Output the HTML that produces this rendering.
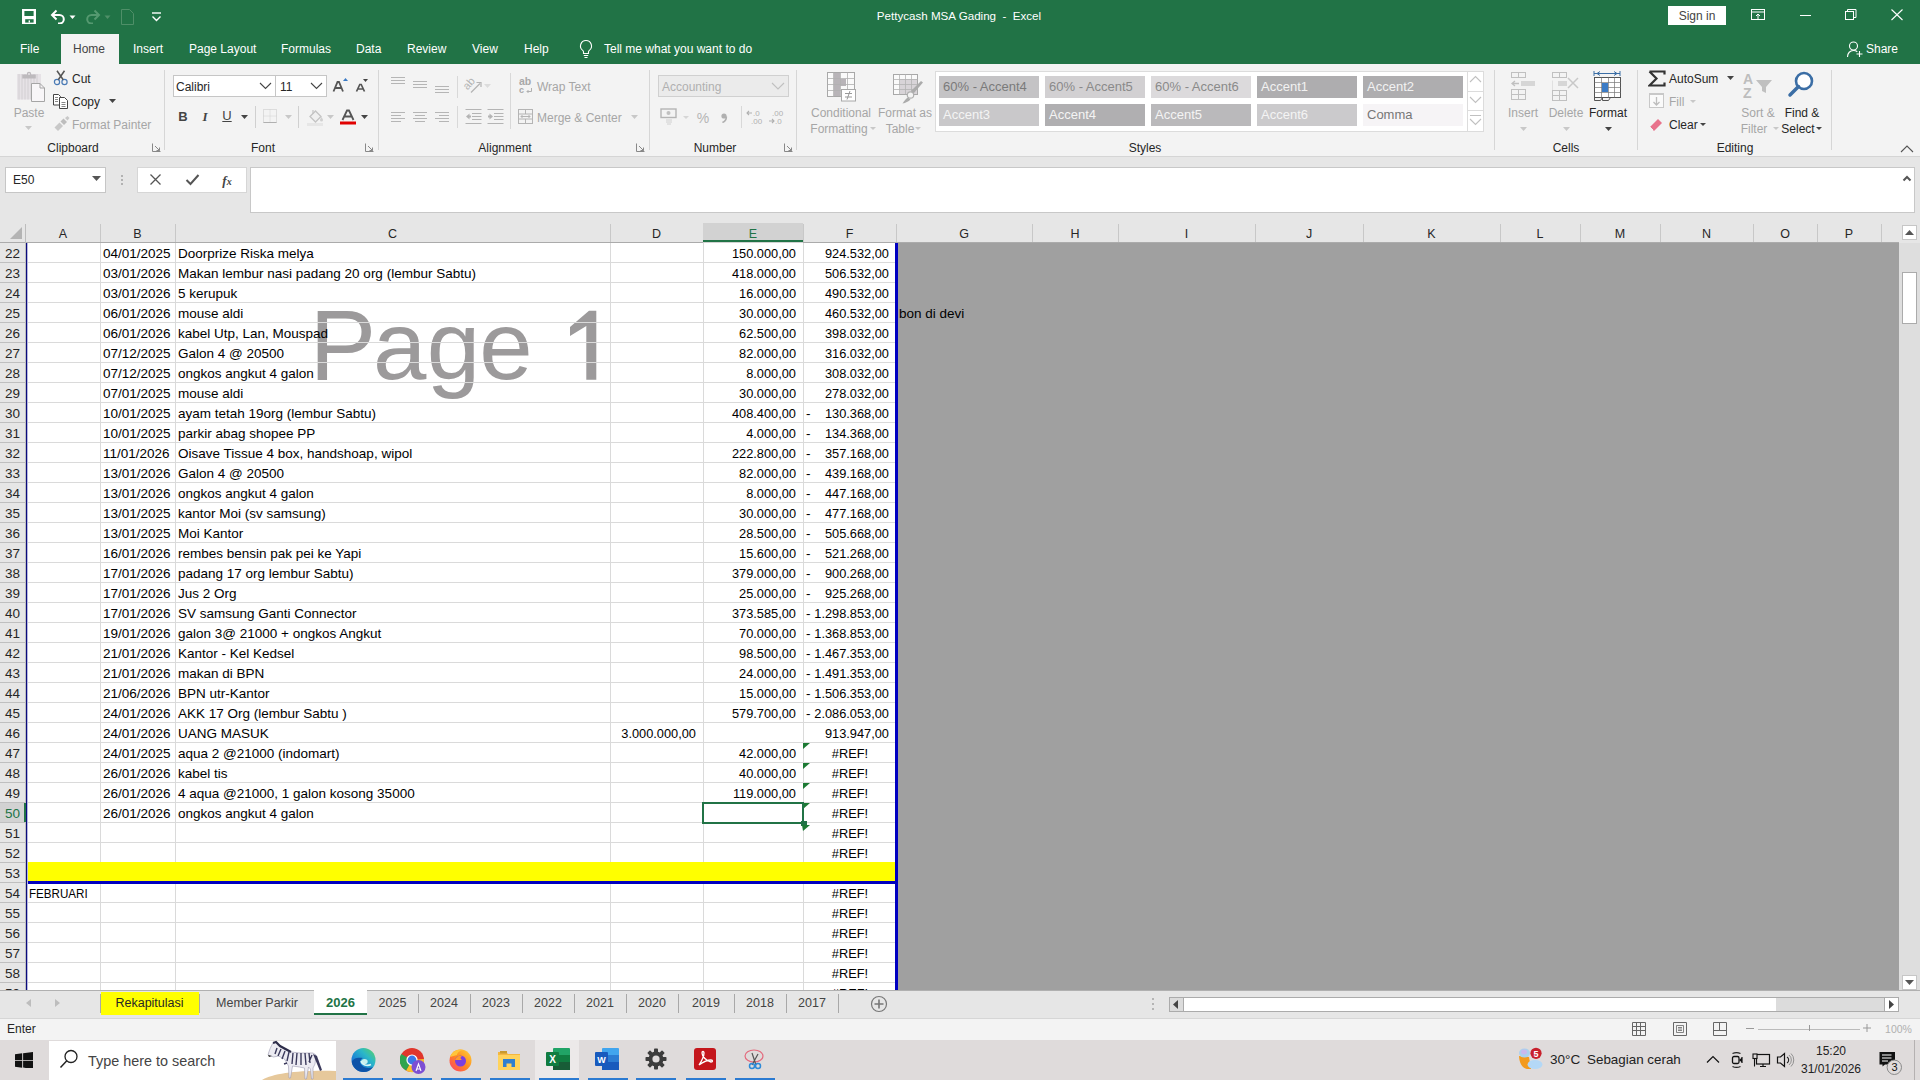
<!DOCTYPE html><html><head><meta charset="utf-8"><style>
html,body{margin:0;padding:0;width:1920px;height:1080px;overflow:hidden;background:#fff}
body{position:relative;font-family:"Liberation Sans",sans-serif}
body>div,body>svg{position:absolute}
div>div{position:absolute}
.t{white-space:nowrap}
.c{position:absolute;white-space:nowrap;font-size:13.5px;line-height:20px;color:#000}
</style></head><body>
<div style="left:0px;top:0px;width:1920px;height:64px;background:#217346"></div>
<svg style="left:22px;top:9px;" width="15" height="16" viewBox="0 0 15 16"><rect x="0" y="0" width="14" height="15" fill="#fff"/><rect x="2.4" y="2" width="9.2" height="5" fill="#217346"/><rect x="3.2" y="10.2" width="8.4" height="3.4" fill="#217346"/><rect x="6.6" y="11.4" width="1.4" height="2.2" fill="#fff"/></svg>
<svg style="left:50px;top:9px;" width="18" height="15" viewBox="0 0 18 15"><path d="M2 6h7.5a4.3 4.3 0 0 1 0 8.6H8" fill="none" stroke="#fff" stroke-width="2"/><path d="M6.5 1.5L2 6l4.5 4.5" fill="none" stroke="#fff" stroke-width="2"/></svg>
<svg style="left:69px;top:15px;" width="8" height="5" viewBox="0 0 8 5"><path d="M.5 .5h6l-3 3.5z" fill="#fff"/></svg>
<svg style="left:86px;top:9px;" width="15" height="15" viewBox="0 0 15 15"><path d="M13 6H5.5a4.3 4.3 0 0 0 0 8.6H7" fill="none" stroke="#559970" stroke-width="2"/><path d="M8.5 1.5L13 6l-4.5 4.5" fill="none" stroke="#559970" stroke-width="2"/></svg>
<svg style="left:104px;top:15px;" width="8" height="5" viewBox="0 0 8 5"><path d="M.5 .5h6l-3 3.5z" fill="#4f8f68"/></svg>
<svg style="left:121px;top:9px;" width="13" height="16" viewBox="0 0 13 16"><path d="M.5 .5h8l4 4v11H.5z" fill="none" stroke="#4f8f68" stroke-width="1"/></svg>
<svg style="left:151px;top:11px;" width="11" height="11" viewBox="0 0 11 11"><path d="M1 2h9" stroke="#fff" stroke-width="1.4"/><path d="M1.5 5.5l4 4 4-4" fill="none" stroke="#fff" stroke-width="1.4"/></svg>
<div class="t" style="left:659px;width:600px;text-align:center;top:6.0px;line-height:20px;font-size:11.6px;color:#fff;">Pettycash MSA Gading&nbsp; -&nbsp; Excel</div>
<div style="left:1668px;top:6px;width:58px;height:19px;background:#fff"></div>
<div class="t" style="left:1397px;width:600px;text-align:center;top:5.5px;line-height:20px;font-size:12px;color:#444;">Sign in</div>
<svg style="left:1751px;top:9px;" width="15" height="12" viewBox="0 0 15 12"><rect x=".5" y=".5" width="13" height="10" fill="none" stroke="#fff" stroke-width="1"/><path d="M.5 3h13" stroke="#fff"/><path d="M7 10V5M5 7l2-2 2 2" fill="none" stroke="#fff" stroke-width="1"/></svg>
<div style="left:1800px;top:15px;width:11px;height:1px;background:#fff"></div>
<svg style="left:1845px;top:9px;" width="12" height="12" viewBox="0 0 12 12"><rect x=".5" y="2.5" width="8" height="8" fill="none" stroke="#fff" stroke-width="1"/><path d="M2.5 2.5V.5h8.5v8H8.5" fill="none" stroke="#fff" stroke-width="1"/></svg>
<svg style="left:1891px;top:9px;" width="12" height="12" viewBox="0 0 12 12"><path d="M.5 .5l11 10.5M11.5 .5L.5 11" stroke="#fff" stroke-width="1.1"/></svg>
<div style="left:61px;top:34px;width:58px;height:30px;background:#f3f3f3"></div>
<div class="t" style="left:20px;top:38.5px;line-height:20px;font-size:12px;color:#fff;">File</div>
<div class="t" style="left:73px;top:38.5px;line-height:20px;font-size:12px;color:#444;">Home</div>
<div class="t" style="left:133px;top:38.5px;line-height:20px;font-size:12px;color:#fff;">Insert</div>
<div class="t" style="left:189px;top:38.5px;line-height:20px;font-size:12px;color:#fff;">Page Layout</div>
<div class="t" style="left:281px;top:38.5px;line-height:20px;font-size:12px;color:#fff;">Formulas</div>
<div class="t" style="left:356px;top:38.5px;line-height:20px;font-size:12px;color:#fff;">Data</div>
<div class="t" style="left:407px;top:38.5px;line-height:20px;font-size:12px;color:#fff;">Review</div>
<div class="t" style="left:472px;top:38.5px;line-height:20px;font-size:12px;color:#fff;">View</div>
<div class="t" style="left:524px;top:38.5px;line-height:20px;font-size:12px;color:#fff;">Help</div>
<svg style="left:578px;top:39px;" width="16" height="20" viewBox="0 0 16 20"><path d="M8 1.5a5.5 5.5 0 0 0-3.3 9.9c.5.4.8 1 .8 1.6v1.5h5v-1.5c0-.6.3-1.2.8-1.6A5.5 5.5 0 0 0 8 1.5z" fill="none" stroke="#fff" stroke-width="1.1"/><path d="M5.8 16.5h4.4M6.5 18.5h3" stroke="#fff" stroke-width="1.1"/></svg>
<div class="t" style="left:604px;top:38.5px;line-height:20px;font-size:12px;color:#fff;">Tell me what you want to do</div>
<svg style="left:1846px;top:40px;" width="18" height="18" viewBox="0 0 18 18"><circle cx="7.5" cy="6" r="4" fill="none" stroke="#fff" stroke-width="1.1"/><path d="M1.5 17c0-4 2.5-6.5 6-6.5 1.5 0 2.8.5 3.8 1.3" fill="none" stroke="#fff" stroke-width="1.1"/><path d="M13.5 11v6M10.5 14h6" stroke="#fff" stroke-width="1.1"/></svg>
<div class="t" style="left:1866px;top:38.5px;line-height:20px;font-size:12px;color:#fff;">Share</div>
<div style="left:0px;top:64px;width:1920px;height:92px;background:#f3f3f3"></div>
<div style="left:0px;top:156px;width:1920px;height:1px;background:#d5d5d5"></div>
<div style="left:164px;top:70px;width:1px;height:80px;background:#d6d6d6"></div>
<div style="left:378px;top:70px;width:1px;height:80px;background:#d6d6d6"></div>
<div style="left:649px;top:70px;width:1px;height:80px;background:#d6d6d6"></div>
<div style="left:796px;top:70px;width:1px;height:80px;background:#d6d6d6"></div>
<div style="left:1494px;top:70px;width:1px;height:80px;background:#d6d6d6"></div>
<div style="left:1637px;top:70px;width:1px;height:80px;background:#d6d6d6"></div>
<div style="left:1831px;top:70px;width:1px;height:80px;background:#d6d6d6"></div>
<div class="t" style="left:-227px;width:600px;text-align:center;top:138.0px;line-height:20px;font-size:12px;color:#262626;">Clipboard</div>
<div class="t" style="left:-37px;width:600px;text-align:center;top:138.0px;line-height:20px;font-size:12px;color:#262626;">Font</div>
<div class="t" style="left:205px;width:600px;text-align:center;top:138.0px;line-height:20px;font-size:12px;color:#262626;">Alignment</div>
<div class="t" style="left:415px;width:600px;text-align:center;top:138.0px;line-height:20px;font-size:12px;color:#262626;">Number</div>
<div class="t" style="left:845px;width:600px;text-align:center;top:138.0px;line-height:20px;font-size:12px;color:#262626;">Styles</div>
<div class="t" style="left:1266px;width:600px;text-align:center;top:138.0px;line-height:20px;font-size:12px;color:#262626;">Cells</div>
<div class="t" style="left:1435px;width:600px;text-align:center;top:138.0px;line-height:20px;font-size:12px;color:#262626;">Editing</div>
<svg style="left:152px;top:143px;" width="10" height="10" viewBox="0 0 10 10"><path d="M.5 .5h8v8" fill="none" stroke="#888" stroke-width="1" transform="rotate(180 4.5 4.5)"/><path d="M3 3l4.5 4.5M7.5 4.5v3h-3" fill="none" stroke="#888" stroke-width="1"/></svg>
<svg style="left:365px;top:143px;" width="10" height="10" viewBox="0 0 10 10"><path d="M.5 .5h8v8" fill="none" stroke="#888" stroke-width="1" transform="rotate(180 4.5 4.5)"/><path d="M3 3l4.5 4.5M7.5 4.5v3h-3" fill="none" stroke="#888" stroke-width="1"/></svg>
<svg style="left:636px;top:143px;" width="10" height="10" viewBox="0 0 10 10"><path d="M.5 .5h8v8" fill="none" stroke="#888" stroke-width="1" transform="rotate(180 4.5 4.5)"/><path d="M3 3l4.5 4.5M7.5 4.5v3h-3" fill="none" stroke="#888" stroke-width="1"/></svg>
<svg style="left:784px;top:143px;" width="10" height="10" viewBox="0 0 10 10"><path d="M.5 .5h8v8" fill="none" stroke="#888" stroke-width="1" transform="rotate(180 4.5 4.5)"/><path d="M3 3l4.5 4.5M7.5 4.5v3h-3" fill="none" stroke="#888" stroke-width="1"/></svg>
<svg style="left:16px;top:71px;" width="30" height="32" viewBox="0 0 30 32"><rect x="1" y="3" width="24" height="25.5" fill="#e6e2e6"/><path d="M3 3v25.5M6 3v25.5M9 3v25.5M12 3v25.5M15 3v25.5M18 3v25.5M21 3v25.5" stroke="#d6d2d6" stroke-width="1.2"/><rect x="6.3" y="3.5" width="13.5" height="4" fill="#bdbabd"/><circle cx="13" cy="3" r="2.2" fill="#bdbabd"/><circle cx="13" cy="3" r="1" fill="#e6e2e6"/><path d="M15.5 12.5h8.5l4.5 4.5v13.5h-13z" fill="#f8f6f8" stroke="#a5a5a5" stroke-width="1"/><path d="M24 12.5v4.5h4.5" fill="none" stroke="#a5a5a5" stroke-width="1"/></svg>
<div class="t" style="left:-271px;width:600px;text-align:center;top:102.5px;line-height:20px;font-size:12px;color:#a6a6a6;">Paste</div>
<svg style="left:25px;top:126px;" width="7" height="4" viewBox="0 0 7 4"><path d="M0 0h7l-3.5 4z" fill="#c8c8c8"/></svg>
<svg style="left:53px;top:70px;" width="16" height="16" viewBox="0 0 16 16"><circle cx="4" cy="12" r="2.6" fill="none" stroke="#4a7ab5" stroke-width="1.2"/><circle cx="11.5" cy="12" r="2.6" fill="none" stroke="#4a7ab5" stroke-width="1.2"/><path d="M5.3 9.8L11.5 .8M10.2 9.8L4 .8" stroke="#555" stroke-width="1.5"/></svg>
<div class="t" style="left:72px;top:68.5px;line-height:20px;font-size:12px;color:#262626;">Cut</div>
<svg style="left:52px;top:93px;" width="17" height="16" viewBox="0 0 17 16"><path d="M1.5 1.5h5l2 2v8.5h-7z" fill="#fff" stroke="#444" stroke-width="1"/><path d="M7.5 4.5h5l3 3v8h-8z" fill="#fff" stroke="#444" stroke-width="1"/><path d="M3 4.5h3M3 6.5h3M3 8.5h3M9.5 9.5h4M9.5 11.5h4M9.5 13.5h4" stroke="#555" stroke-width=".7"/></svg>
<div class="t" style="left:72px;top:91.5px;line-height:20px;font-size:12px;color:#262626;">Copy</div>
<svg style="left:109px;top:99px;" width="7" height="4" viewBox="0 0 7 4"><path d="M0 0h7l-3.5 4z" fill="#444"/></svg>
<svg style="left:53px;top:116px;" width="17" height="15" viewBox="0 0 17 15"><path d="M1.5 11.5l5-5 3.5 3.5-5 5z" fill="#c8c8c8"/><path d="M7.5 5.5l3-3 3.5 3.5-3 3z" fill="#bdbdbd"/><path d="M12 2l2.5-2 2 2-2 2.5z" fill="#c8c8c8"/></svg>
<div class="t" style="left:72px;top:114.5px;line-height:20px;font-size:12px;color:#a6a6a6;">Format Painter</div>
<div style="left:173px;top:75px;width:103px;height:22px;background:#fff;border:1px solid #c6c6c6;box-sizing:border-box"></div>
<div style="left:275px;top:75px;width:52px;height:22px;background:#fff;border:1px solid #c6c6c6;box-sizing:border-box"></div>
<div class="t" style="left:176px;top:77.0px;line-height:20px;font-size:12px;color:#262626;">Calibri</div>
<div class="t" style="left:280px;top:77.0px;line-height:20px;font-size:12px;color:#262626;">11</div>
<svg style="left:259px;top:82px;" width="13" height="8" viewBox="0 0 13 8"><path d="M1 1l5.5 5.5L12 1" fill="none" stroke="#444" stroke-width="1.1"/></svg>
<svg style="left:310px;top:82px;" width="13" height="8" viewBox="0 0 13 8"><path d="M1 1l5.5 5.5L12 1" fill="none" stroke="#444" stroke-width="1.1"/></svg>
<svg style="left:332px;top:77px;" width="18" height="16" viewBox="0 0 18 16"><path d="M1.5 14.5L5.5 5h1.5l4 9.5M3.2 11h6" fill="none" stroke="#555" stroke-width="1.8"/><path d="M11 4h5l-2.5-3z" fill="#3b7bc5"/></svg>
<svg style="left:355px;top:78px;" width="15" height="15" viewBox="0 0 15 15"><path d="M1.5 13.5L4.8 6.5h1.4l3.3 7M2.8 11h5.4" fill="none" stroke="#555" stroke-width="1.7"/><path d="M8 1h5l-2.5 3z" fill="#444"/></svg>
<div class="t" style="left:-117px;width:600px;text-align:center;top:107.0px;line-height:20px;font-size:13px;color:#444;font-weight:bold">B</div>
<div class="t" style="left:-95px;width:600px;text-align:center;top:107.0px;line-height:20px;font-size:13px;color:#444;font-style:italic;font-family:Liberation Serif;font-weight:bold">I</div>
<div class="t" style="left:-73px;width:600px;text-align:center;top:106.0px;line-height:20px;font-size:13px;color:#444;text-decoration:underline">U</div>
<svg style="left:241px;top:115px;" width="7" height="4" viewBox="0 0 7 4"><path d="M0 0h7l-3.5 4z" fill="#444"/></svg>
<div style="left:255px;top:106px;width:1px;height:22px;background:#d0d0d0"></div>
<svg style="left:263px;top:109px;" width="14" height="14" viewBox="0 0 14 14"><rect x=".5" y=".5" width="13" height="13" fill="none" stroke="#c4c4c4" stroke-dasharray="1 1"/><path d="M7 .5v13M.5 7h13" stroke="#d0d0d0" stroke-dasharray="1 1"/><path d="M.5 13.5h13" stroke="#b0b0b0"/></svg>
<svg style="left:285px;top:115px;" width="7" height="4" viewBox="0 0 7 4"><path d="M0 0h7l-3.5 4z" fill="#c8c8c8"/></svg>
<div style="left:298px;top:106px;width:1px;height:22px;background:#d0d0d0"></div>
<svg style="left:305px;top:107px;" width="20" height="19" viewBox="0 0 20 19"><path d="M5 9.5l5.5-5.5 5.5 5.5-5.5 5.5z" fill="#f0f0f0" stroke="#c4c4c4" stroke-width="1.3"/><path d="M8 3V7" stroke="#c4c4c4" stroke-width="1.2"/><path d="M16.5 10c1 1.5 1.5 2.5 1.5 3a1 1 0 0 1-3 0c0-.5.5-1.5 1.5-3z" fill="#d0d0d0"/><rect x="2" y="16" width="16" height="3" fill="#e6e6e6"/></svg>
<svg style="left:327px;top:115px;" width="7" height="4" viewBox="0 0 7 4"><path d="M0 0h7l-3.5 4z" fill="#c8c8c8"/></svg>
<svg style="left:340px;top:109px;" width="16" height="16" viewBox="0 0 16 16"><path d="M2.5 11L7 1.5h2L13.5 11M4.6 7.5h6.8" fill="none" stroke="#555" stroke-width="1.8"/><rect x="0" y="12.5" width="16" height="3" fill="#e00000"/></svg>
<svg style="left:361px;top:115px;" width="7" height="4" viewBox="0 0 7 4"><path d="M0 0h7l-3.5 4z" fill="#444"/></svg>
<svg style="left:391px;top:77px;" width="16" height="10" viewBox="0 0 16 10"><path d="M0 0.5h14" stroke="#b5b5b5" stroke-width="1"/><path d="M0 3.5h14" stroke="#b5b5b5" stroke-width="1"/><path d="M0 6.5h14" stroke="#b5b5b5" stroke-width="1"/></svg>
<svg style="left:413px;top:81px;" width="16" height="10" viewBox="0 0 16 10"><path d="M0 0.5h14" stroke="#b5b5b5" stroke-width="1"/><path d="M0 3.5h14" stroke="#b5b5b5" stroke-width="1"/><path d="M0 6.5h14" stroke="#b5b5b5" stroke-width="1"/></svg>
<svg style="left:435px;top:86px;" width="16" height="10" viewBox="0 0 16 10"><path d="M0 0.5h14" stroke="#b5b5b5" stroke-width="1"/><path d="M0 3.5h14" stroke="#b5b5b5" stroke-width="1"/><path d="M0 6.5h14" stroke="#b5b5b5" stroke-width="1"/></svg>
<div style="left:457px;top:76px;width:1px;height:22px;background:#d8d8d8"></div>
<svg style="left:462px;top:76px;" width="22" height="20" viewBox="0 0 22 20"><text x="0" y="0" font-size="11" fill="#b4b4b4" font-family="Liberation Sans" transform="translate(5.5 14.5) rotate(-48)">ab</text><path d="M9 16.5l9-9" stroke="#b4b4b4" stroke-width="1.3"/><path d="M14.5 6.5h4.5v4.5" fill="none" stroke="#b4b4b4" stroke-width="1.2"/></svg>
<svg style="left:484px;top:84px;" width="7" height="4" viewBox="0 0 7 4"><path d="M0 0h7l-3.5 4z" fill="#dcdcdc"/></svg>
<svg style="left:391px;top:112px;" width="16" height="13" viewBox="0 0 16 13"><path d="M0 0.5h14" stroke="#b5b5b5" stroke-width="1"/><path d="M0 3.5h10" stroke="#b5b5b5" stroke-width="1"/><path d="M0 6.5h14" stroke="#b5b5b5" stroke-width="1"/><path d="M0 9.5h10" stroke="#b5b5b5" stroke-width="1"/></svg>
<svg style="left:413px;top:112px;" width="16" height="13" viewBox="0 0 16 13"><path d="M0 0.5h14" stroke="#b5b5b5" stroke-width="1"/><path d="M2 3.5h10" stroke="#b5b5b5" stroke-width="1"/><path d="M0 6.5h14" stroke="#b5b5b5" stroke-width="1"/><path d="M2 9.5h10" stroke="#b5b5b5" stroke-width="1"/></svg>
<svg style="left:435px;top:112px;" width="16" height="13" viewBox="0 0 16 13"><path d="M0 0.5h14" stroke="#b5b5b5" stroke-width="1"/><path d="M4 3.5h10" stroke="#b5b5b5" stroke-width="1"/><path d="M0 6.5h14" stroke="#b5b5b5" stroke-width="1"/><path d="M4 9.5h10" stroke="#b5b5b5" stroke-width="1"/></svg>
<div style="left:457px;top:106px;width:1px;height:22px;background:#d8d8d8"></div>
<svg style="left:465px;top:109px;" width="17" height="15" viewBox="0 0 17 15"><path d="M.5 .5h16M7 4.5h9.5M7 7.5h9.5M7 10.5h9.5M.5 14.5h16" stroke="#b4b4b4"/><path d="M1 7.5l3.5-3v6z" fill="#b4b4b4"/><rect x="4" y="6.5" width="2" height="2" fill="#b4b4b4"/></svg>
<svg style="left:487px;top:109px;" width="17" height="15" viewBox="0 0 17 15"><path d="M.5 .5h16M7 4.5h9.5M7 7.5h9.5M7 10.5h9.5M.5 14.5h16" stroke="#b4b4b4"/><path d="M6 7.5l-3.5-3v6z" fill="#b4b4b4"/><rect x="1" y="6.5" width="2" height="2" fill="#b4b4b4"/></svg>
<div style="left:510px;top:73px;width:1px;height:56px;background:#d8d8d8"></div>
<svg style="left:518px;top:76px;" width="16" height="18" viewBox="0 0 16 18"><text x="1" y="9" font-size="10.5" fill="#a8a8a8" font-family="Liberation Sans" font-weight="bold">ab</text><text x="1" y="17" font-size="9" fill="#a8a8a8" font-family="Liberation Sans" font-weight="bold">c</text><path d="M13.5 12v3.5H9M10.5 14l-1.5 1.5 1.5 1.5" fill="none" stroke="#b0b0b0" stroke-width="1"/></svg>
<div class="t" style="left:537px;top:77.0px;line-height:20px;font-size:12px;color:#a6a6a6;">Wrap Text</div>
<svg style="left:517px;top:108px;" width="17" height="17" viewBox="0 0 17 17"><rect x="1.5" y="1.5" width="14" height="14" fill="none" stroke="#b4b4b4" stroke-width="1"/><path d="M1.5 6h14M1.5 11h14M8.5 1.5V6M8.5 11v4.5" stroke="#b4b4b4" stroke-width="1"/><path d="M4 8.5h9M5.5 7l-1.5 1.5 1.5 1.5M11.5 7l1.5 1.5-1.5 1.5" fill="none" stroke="#b4b4b4" stroke-width="1"/></svg>
<div class="t" style="left:537px;top:107.5px;line-height:20px;font-size:12px;color:#a6a6a6;">Merge &amp; Center</div>
<svg style="left:631px;top:115px;" width="7" height="4" viewBox="0 0 7 4"><path d="M0 0h7l-3.5 4z" fill="#c8c8c8"/></svg>
<div style="left:658px;top:75px;width:131px;height:22px;background:#ebebeb;border:1px solid #d0d0d0;box-sizing:border-box"></div>
<div class="t" style="left:662px;top:77.0px;line-height:20px;font-size:12px;color:#b0b0b0;">Accounting</div>
<svg style="left:771px;top:82px;" width="14" height="8" viewBox="0 0 14 8"><path d="M1 1l6 6 6-6" fill="none" stroke="#c0c0c0" stroke-width="1.1"/></svg>
<svg style="left:660px;top:108px;" width="18" height="18" viewBox="0 0 18 18"><rect x="1" y="1" width="15" height="8.5" fill="none" stroke="#b4b4b4" stroke-width="1.4"/><circle cx="8.5" cy="5" r="2" fill="#c0c0c0"/><path d="M6 12h6M6 14h6M7 16h4" stroke="#d0d0d0" stroke-width="1"/></svg>
<svg style="left:683px;top:116px;" width="6" height="3" viewBox="0 0 6 3"><path d="M0 0h6l-3 3z" fill="#d6d6d6"/></svg>
<div class="t" style="left:403px;width:600px;text-align:center;top:108.0px;line-height:20px;font-size:14px;color:#b5b5b5;">%</div>
<svg style="left:719px;top:111px;" width="10" height="12" viewBox="0 0 10 12"><circle cx="5" cy="5" r="2.6" fill="#b0b0b0"/><path d="M7.4 5.5c0 3-1.5 5-4 6" fill="none" stroke="#b0b0b0" stroke-width="1.6"/></svg>
<div style="left:741px;top:106px;width:1px;height:22px;background:#d8d8d8"></div>
<svg style="left:746px;top:108px;" width="20" height="18" viewBox="0 0 20 18"><path d="M1 5h5M3 3L1 5l2 2" fill="none" stroke="#b0b0b0" stroke-width="1.1"/><text x="7" y="8" font-size="8" fill="#b0b0b0" font-family="Liberation Sans">.0</text><text x="5" y="16" font-size="8" fill="#b0b0b0" font-family="Liberation Sans">.00</text></svg>
<svg style="left:768px;top:108px;" width="20" height="18" viewBox="0 0 20 18"><text x="4" y="8" font-size="8" fill="#b0b0b0" font-family="Liberation Sans">.00</text><path d="M1 13h5M4 11l2 2-2 2" fill="none" stroke="#b0b0b0" stroke-width="1.1"/><text x="7" y="16" font-size="8" fill="#b0b0b0" font-family="Liberation Sans">.0</text></svg>
<svg style="left:826px;top:71px;" width="32" height="32" viewBox="0 0 32 32"><rect x="1.5" y="1.5" width="27" height="24" fill="#fafafa" stroke="#a8a8a8"/><rect x="8" y="2" width="6" height="23" fill="#b8b4b8"/><rect x="14" y="8" width="6" height="7" fill="#b8b4b8"/><path d="M1.5 7.5h27M1.5 13.5h27M1.5 19.5h27M7.5 1.5v24M14.5 1.5v24M21.5 1.5v24" stroke="#b0b0b0" stroke-width=".8"/><rect x="15.5" y="18.5" width="14" height="11.5" fill="#fff" stroke="#a8a8a8"/><path d="M19 22.5h7M19 26h7M24 20l-3 8.5" stroke="#999" stroke-width="1"/></svg>
<div class="t" style="left:541px;width:600px;text-align:center;top:103.0px;line-height:20px;font-size:12px;color:#a6a6a6;">Conditional</div>
<div class="t" style="left:539px;width:600px;text-align:center;top:119.0px;line-height:20px;font-size:12px;color:#a6a6a6;">Formatting</div>
<svg style="left:870px;top:127px;" width="6" height="4" viewBox="0 0 6 4"><path d="M0 0h6l-3 3z" fill="#c8c8c8"/></svg>
<svg style="left:891px;top:73px;" width="34" height="31" viewBox="0 0 34 31"><rect x="2.5" y="1.5" width="24" height="20" fill="#fafafa" stroke="#a8a8a8"/><rect x="9" y="6" width="17" height="15" fill="#d8d4d8"/><path d="M2.5 6.5h24M2.5 11.5h24M2.5 16.5h24M8.5 1.5v20M14.5 1.5v20M20.5 1.5v20" stroke="#b4b4b4" stroke-width=".8"/><path d="M32 9.5L22.5 20.5l-2.5-2.5L30 8z" fill="#ababab"/><circle cx="19.5" cy="22" r="3.2" fill="#f3f3f3" stroke="#b0b0b0" stroke-width="1.2"/><path d="M17 24.5c-2 1-4 3.5-5.5 6 3-.5 6-2 8-4z" fill="#ababab"/></svg>
<div class="t" style="left:605px;width:600px;text-align:center;top:103.0px;line-height:20px;font-size:12px;color:#a6a6a6;">Format as</div>
<div class="t" style="left:600px;width:600px;text-align:center;top:119.0px;line-height:20px;font-size:12px;color:#a6a6a6;">Table</div>
<svg style="left:915px;top:127px;" width="6" height="4" viewBox="0 0 6 4"><path d="M0 0h6l-3 3z" fill="#c8c8c8"/></svg>
<div style="left:935px;top:71px;width:549px;height:61px;background:#fff;border:1px solid #dcdcdc;box-sizing:border-box"></div>
<div style="left:939px;top:76px;width:100px;height:22px;background:#c4c3c5"></div>
<div class="t" style="left:943px;top:77.0px;line-height:20px;font-size:13px;color:#7a7a7a;">60% - Accent4</div>
<div style="left:1045px;top:76px;width:100px;height:22px;background:#d2d0d2"></div>
<div class="t" style="left:1049px;top:77.0px;line-height:20px;font-size:13px;color:#8a8a8a;">60% - Accent5</div>
<div style="left:1151px;top:76px;width:100px;height:22px;background:#dcdadc"></div>
<div class="t" style="left:1155px;top:77.0px;line-height:20px;font-size:13px;color:#8a8a8a;">60% - Accent6</div>
<div style="left:1257px;top:76px;width:100px;height:22px;background:#aeadaf"></div>
<div class="t" style="left:1261px;top:77.0px;line-height:20px;font-size:13px;color:#f2f2f2;">Accent1</div>
<div style="left:1363px;top:76px;width:100px;height:22px;background:#aeadaf"></div>
<div class="t" style="left:1367px;top:77.0px;line-height:20px;font-size:13px;color:#f2f2f2;">Accent2</div>
<div style="left:939px;top:104px;width:100px;height:22px;background:#c9c8ca"></div>
<div class="t" style="left:943px;top:105.0px;line-height:20px;font-size:13px;color:#f4f4f4;">Accent3</div>
<div style="left:1045px;top:104px;width:100px;height:22px;background:#b0afb1"></div>
<div class="t" style="left:1049px;top:105.0px;line-height:20px;font-size:13px;color:#f4f4f4;">Accent4</div>
<div style="left:1151px;top:104px;width:100px;height:22px;background:#bab9bb"></div>
<div class="t" style="left:1155px;top:105.0px;line-height:20px;font-size:13px;color:#f4f4f4;">Accent5</div>
<div style="left:1257px;top:104px;width:100px;height:22px;background:#cbcacc"></div>
<div class="t" style="left:1261px;top:105.0px;line-height:20px;font-size:13px;color:#f4f4f4;">Accent6</div>
<div style="left:1363px;top:104px;width:100px;height:22px;background:#f6f4f6"></div>
<div class="t" style="left:1367px;top:105.0px;line-height:20px;font-size:13px;color:#777;">Comma</div>
<div style="left:1467px;top:71px;width:17px;height:61px;background:#fff;border:1px solid #dcdcdc;box-sizing:border-box"></div>
<div style="left:1467px;top:91px;width:17px;height:1px;background:#dcdcdc"></div>
<div style="left:1467px;top:110px;width:17px;height:1px;background:#dcdcdc"></div>
<svg style="left:1468px;top:75px;" width="15" height="10" viewBox="0 0 15 10"><path d="M2 7l5.5-5.5L13 7" fill="none" stroke="#c0c0c0" stroke-width="1.1"/></svg>
<svg style="left:1468px;top:95px;" width="15" height="10" viewBox="0 0 15 10"><path d="M2 2l5.5 5.5L13 2" fill="none" stroke="#c0c0c0" stroke-width="1.1"/></svg>
<svg style="left:1468px;top:113px;" width="15" height="15" viewBox="0 0 15 15"><path d="M2 2.5h11" stroke="#c0c0c0"/><path d="M2 6l5.5 5.5L13 6" fill="none" stroke="#c0c0c0" stroke-width="1.1"/></svg>
<svg style="left:1510px;top:71px;" width="30" height="30" viewBox="0 0 30 30"><rect x="1.5" y="1.5" width="14" height="5" fill="none" stroke="#c0c0c0"/><path d="M8.5 1.5v5" stroke="#c0c0c0"/><rect x="11" y="10" width="14" height="5" fill="#d6d6d6"/><path d="M2 12.5h7M5 10l-3 2.5L5 15" fill="none" stroke="#c0c0c0" stroke-width="1.3"/><rect x="1.5" y="18.5" width="14" height="10" fill="none" stroke="#c0c0c0"/><path d="M8.5 18.5v10M1.5 23.5h14" stroke="#c0c0c0"/></svg>
<div class="t" style="left:1223px;width:600px;text-align:center;top:103.0px;line-height:20px;font-size:12px;color:#a6a6a6;">Insert</div>
<svg style="left:1520px;top:127px;" width="7" height="4" viewBox="0 0 7 4"><path d="M0 0h7l-3.5 4z" fill="#c8c8c8"/></svg>
<svg style="left:1551px;top:71px;" width="32" height="30" viewBox="0 0 32 30"><rect x="1.5" y="1.5" width="14" height="5" fill="none" stroke="#c0c0c0"/><path d="M8.5 1.5v5" stroke="#c0c0c0"/><rect x="7" y="10" width="9" height="5" fill="#d6d6d6"/><path d="M1.5 9.5v20M15.5 9.5v0" stroke="#e0e0e0"/><rect x="1.5" y="19.5" width="14" height="10" fill="none" stroke="#c0c0c0"/><path d="M8.5 19.5v10M1.5 24.5h14" stroke="#c0c0c0"/><path d="M17 7l10 10M27 7L17 17" stroke="#c8c8c8" stroke-width="1.5"/></svg>
<div class="t" style="left:1266px;width:600px;text-align:center;top:103.0px;line-height:20px;font-size:12px;color:#a6a6a6;">Delete</div>
<svg style="left:1563px;top:127px;" width="7" height="4" viewBox="0 0 7 4"><path d="M0 0h7l-3.5 4z" fill="#c8c8c8"/></svg>
<svg style="left:1593px;top:70px;" width="30" height="32" viewBox="0 0 30 32"><path d="M1 3.5h26M1 1v5M27 1v5M4 3.5l3-2M4 3.5l3 2M24 3.5l-3-2M24 3.5l-3 2" fill="none" stroke="#3b6ea5" stroke-width="1"/><rect x="1.5" y="7.5" width="26" height="20" fill="#fff" stroke="#555"/><path d="M8.5 7.5v20M15.5 7.5v20M21.5 7.5v20M1.5 12.5h26M1.5 17.5h26M1.5 22.5h26" stroke="#777" stroke-width=".7"/><rect x="9" y="13" width="6" height="9" fill="#3b7bc5"/><path d="M1.5 27.5v3h6l2-3M9.5 27.5v3h6l2-3" fill="none" stroke="#555"/></svg>
<div class="t" style="left:1308px;width:600px;text-align:center;top:103.0px;line-height:20px;font-size:12px;color:#262626;">Format</div>
<svg style="left:1605px;top:127px;" width="7" height="4" viewBox="0 0 7 4"><path d="M0 0h7l-3.5 4z" fill="#444"/></svg>
<svg style="left:1648px;top:70px;" width="18" height="17" viewBox="0 0 18 17"><path d="M1.5 1.5h15v3M1.5 1.5l7 7-7 7h15v-3" fill="none" stroke="#333" stroke-width="2.2" stroke-linejoin="miter"/></svg>
<div class="t" style="left:1669px;top:68.5px;line-height:20px;font-size:12px;color:#262626;">AutoSum</div>
<svg style="left:1727px;top:76px;" width="7" height="4" viewBox="0 0 7 4"><path d="M0 0h7l-3.5 4z" fill="#444"/></svg>
<svg style="left:1649px;top:93px;" width="16" height="16" viewBox="0 0 16 16"><rect x=".5" y=".5" width="14" height="14" fill="#fafafa" stroke="#c8c8c8"/><rect x="0" y="0" width="15" height="2" fill="#c8c8c8"/><path d="M7.5 4v8M4.5 9l3 3 3-3" fill="none" stroke="#bdbdbd" stroke-width="1.3"/></svg>
<div class="t" style="left:1669px;top:91.5px;line-height:20px;font-size:12px;color:#a6a6a6;">Fill</div>
<svg style="left:1690px;top:100px;" width="6" height="4" viewBox="0 0 6 4"><path d="M0 0h6l-3 3z" fill="#c8c8c8"/></svg>
<svg style="left:1649px;top:116px;" width="15" height="15" viewBox="0 0 15 15"><path d="M1 11l8-8 4 4-8 8z" fill="#e8738c"/><path d="M1 11l3 3" stroke="#f3f3f3" stroke-width="1"/></svg>
<div class="t" style="left:1669px;top:114.5px;line-height:20px;font-size:12px;color:#262626;">Clear</div>
<svg style="left:1700px;top:123px;" width="6" height="4" viewBox="0 0 6 4"><path d="M0 0h6l-3 3z" fill="#444"/></svg>
<svg style="left:1743px;top:71px;" width="32" height="30" viewBox="0 0 32 30"><text x="0" y="13" font-size="14" fill="#bdbdbd" font-family="Liberation Sans" font-weight="bold">A</text><text x="0" y="27" font-size="14" fill="#bdbdbd" font-family="Liberation Sans" font-weight="bold">Z</text><path d="M13 9h16l-6 7v6l-4-2v-4z" fill="#c0c0c0"/></svg>
<div class="t" style="left:1458px;width:600px;text-align:center;top:103.0px;line-height:20px;font-size:12px;color:#a6a6a6;">Sort &amp;</div>
<div class="t" style="left:1454px;width:600px;text-align:center;top:119.0px;line-height:20px;font-size:12px;color:#a6a6a6;">Filter</div>
<svg style="left:1773px;top:127px;" width="6" height="4" viewBox="0 0 6 4"><path d="M0 0h6l-3 3z" fill="#c8c8c8"/></svg>
<svg style="left:1786px;top:70px;" width="30" height="30" viewBox="0 0 30 30"><circle cx="18" cy="11" r="8" fill="#fff" stroke="#3b6ea5" stroke-width="2.6"/><path d="M12.5 16.5L4 25" stroke="#3b6ea5" stroke-width="3.5" stroke-linecap="round"/></svg>
<div class="t" style="left:1502px;width:600px;text-align:center;top:103.0px;line-height:20px;font-size:12px;color:#262626;">Find &amp;</div>
<div class="t" style="left:1498px;width:600px;text-align:center;top:119.0px;line-height:20px;font-size:12px;color:#262626;">Select</div>
<svg style="left:1816px;top:127px;" width="6" height="4" viewBox="0 0 6 4"><path d="M0 0h6l-3 3z" fill="#444"/></svg>
<svg style="left:1900px;top:145px;" width="14" height="8" viewBox="0 0 14 8"><path d="M1 7l6-6 6 6" fill="none" stroke="#555" stroke-width="1.1"/></svg>
<div style="left:0px;top:157px;width:1920px;height:66px;background:#e6e6e6"></div>
<div style="left:5px;top:167px;width:101px;height:26px;background:#fff;border:1px solid #c6c6c6;box-sizing:border-box"></div>
<div class="t" style="left:13px;top:170.0px;line-height:20px;font-size:12px;color:#262626;">E50</div>
<svg style="left:92px;top:176px;" width="9" height="6" viewBox="0 0 9 6"><path d="M0 0h9l-4.5 5z" fill="#555"/></svg>
<div style="left:121px;top:175px;width:2px;height:2px;background:#a0a0a0;border-radius:1px"></div>
<div style="left:121px;top:179px;width:2px;height:2px;background:#a0a0a0;border-radius:1px"></div>
<div style="left:121px;top:183px;width:2px;height:2px;background:#a0a0a0;border-radius:1px"></div>
<div style="left:137px;top:167px;width:110px;height:26px;background:#fff;border:1px solid #d6d6d6;box-sizing:border-box"></div>
<svg style="left:149px;top:173px;" width="13" height="13" viewBox="0 0 13 13"><path d="M1.5 1.5l10 10M11.5 1.5l-10 10" stroke="#555" stroke-width="1.3"/></svg>
<svg style="left:185px;top:173px;" width="15" height="13" viewBox="0 0 15 13"><path d="M1.5 7l4 4L13.5 2" fill="none" stroke="#555" stroke-width="2"/></svg>
<div class="t" style="left:-73px;width:600px;text-align:center;top:171.0px;line-height:20px;font-size:13px;color:#444;font-family:Liberation Serif;font-weight:bold"><i>f</i><i style="font-size:10px">x</i></div>
<div style="left:250px;top:167px;width:1665px;height:46px;background:#fff;border:1px solid #c8c8c8;box-sizing:border-box"></div>
<svg style="left:1902px;top:175px;" width="10" height="8" viewBox="0 0 10 8"><path d="M1.5 5.5l3.5-3.5 3.5 3.5" fill="none" stroke="#555" stroke-width="2"/></svg>
<div style="left:0px;top:223px;width:1899px;height:20px;background:#e6e6e6"></div>
<div style="left:0px;top:242px;width:1899px;height:1px;background:#ababab"></div>
<svg style="left:9px;top:226px;" width="14" height="14" viewBox="0 0 14 14"><path d="M13 1v12H1z" fill="#b4b4b4"/></svg>
<div style="left:25px;top:224px;width:1px;height:19px;background:#bdbdbd"></div>
<div style="left:100px;top:224px;width:1px;height:18px;background:#c8c8c8"></div>
<div class="t" style="left:-237.0px;width:600px;text-align:center;top:224.0px;line-height:20px;font-size:12.5px;color:#262626;">A</div>
<div style="left:175px;top:224px;width:1px;height:18px;background:#c8c8c8"></div>
<div class="t" style="left:-162.5px;width:600px;text-align:center;top:224.0px;line-height:20px;font-size:12.5px;color:#262626;">B</div>
<div style="left:610px;top:224px;width:1px;height:18px;background:#c8c8c8"></div>
<div class="t" style="left:92.5px;width:600px;text-align:center;top:224.0px;line-height:20px;font-size:12.5px;color:#262626;">C</div>
<div style="left:703px;top:224px;width:1px;height:18px;background:#c8c8c8"></div>
<div class="t" style="left:356.5px;width:600px;text-align:center;top:224.0px;line-height:20px;font-size:12.5px;color:#262626;">D</div>
<div style="left:703px;top:223px;width:100px;height:20px;background:#d2d2d2"></div>
<div style="left:703px;top:240px;width:100px;height:2px;background:#217346"></div>
<div style="left:803px;top:224px;width:1px;height:18px;background:#c8c8c8"></div>
<div class="t" style="left:453.0px;width:600px;text-align:center;top:224.0px;line-height:20px;font-size:12.5px;color:#217346;">E</div>
<div style="left:896px;top:224px;width:1px;height:18px;background:#c8c8c8"></div>
<div class="t" style="left:549.5px;width:600px;text-align:center;top:224.0px;line-height:20px;font-size:12.5px;color:#262626;">F</div>
<div style="left:1032px;top:224px;width:1px;height:18px;background:#c8c8c8"></div>
<div class="t" style="left:664.0px;width:600px;text-align:center;top:224.0px;line-height:20px;font-size:12.5px;color:#262626;">G</div>
<div style="left:1118px;top:224px;width:1px;height:18px;background:#c8c8c8"></div>
<div class="t" style="left:775.0px;width:600px;text-align:center;top:224.0px;line-height:20px;font-size:12.5px;color:#262626;">H</div>
<div style="left:1255px;top:224px;width:1px;height:18px;background:#c8c8c8"></div>
<div class="t" style="left:886.5px;width:600px;text-align:center;top:224.0px;line-height:20px;font-size:12.5px;color:#262626;">I</div>
<div style="left:1363px;top:224px;width:1px;height:18px;background:#c8c8c8"></div>
<div class="t" style="left:1009.0px;width:600px;text-align:center;top:224.0px;line-height:20px;font-size:12.5px;color:#262626;">J</div>
<div style="left:1500px;top:224px;width:1px;height:18px;background:#c8c8c8"></div>
<div class="t" style="left:1131.5px;width:600px;text-align:center;top:224.0px;line-height:20px;font-size:12.5px;color:#262626;">K</div>
<div style="left:1580px;top:224px;width:1px;height:18px;background:#c8c8c8"></div>
<div class="t" style="left:1240.0px;width:600px;text-align:center;top:224.0px;line-height:20px;font-size:12.5px;color:#262626;">L</div>
<div style="left:1660px;top:224px;width:1px;height:18px;background:#c8c8c8"></div>
<div class="t" style="left:1320.0px;width:600px;text-align:center;top:224.0px;line-height:20px;font-size:12.5px;color:#262626;">M</div>
<div style="left:1753px;top:224px;width:1px;height:18px;background:#c8c8c8"></div>
<div class="t" style="left:1406.5px;width:600px;text-align:center;top:224.0px;line-height:20px;font-size:12.5px;color:#262626;">N</div>
<div style="left:1817px;top:224px;width:1px;height:18px;background:#c8c8c8"></div>
<div class="t" style="left:1485.0px;width:600px;text-align:center;top:224.0px;line-height:20px;font-size:12.5px;color:#262626;">O</div>
<div style="left:1881px;top:224px;width:1px;height:18px;background:#c8c8c8"></div>
<div class="t" style="left:1549.0px;width:600px;text-align:center;top:224.0px;line-height:20px;font-size:12.5px;color:#262626;">P</div>
<div style="left:0px;top:243px;width:1899px;height:747px;background:#a0a0a0"></div>
<div style="left:0px;top:243px;width:25px;height:747px;background:#e6e6e6"></div>
<div style="left:25px;top:243px;width:1px;height:747px;background:#bdbdbd"></div>
<div style="left:26px;top:243px;width:870px;height:747px;background:#fff"></div>
<div class="t" style="left:309.5px;top:295.2px;line-height:100px;font-size:100px;color:#9c9a9b">P</div>
<div class="t" style="left:373px;top:296.4px;line-height:100px;font-size:96px;color:#9c9a9b">a</div>
<div class="t" style="left:426.8px;top:296.4px;line-height:100px;font-size:96px;color:#9c9a9b">g</div>
<div class="t" style="left:479.3px;top:296.4px;line-height:100px;font-size:96px;color:#9c9a9b">e</div>
<svg style="left:560px;top:300px;" width="40" height="90" viewBox="0 0 40 90"><path d="M36.3 10.8V79.7H26.3V26L10 36V27L29 10.8z" fill="#9c9a9b"/></svg>
<div style="left:26px;top:262px;width:870px;height:1px;background:#dadada"></div><div style="left:0;top:262px;width:26px;height:1px;background:#bfbfbf"></div><div style="left:26px;top:282px;width:870px;height:1px;background:#dadada"></div><div style="left:0;top:282px;width:26px;height:1px;background:#bfbfbf"></div><div style="left:26px;top:302px;width:870px;height:1px;background:#dadada"></div><div style="left:0;top:302px;width:26px;height:1px;background:#bfbfbf"></div><div style="left:26px;top:322px;width:870px;height:1px;background:#dadada"></div><div style="left:0;top:322px;width:26px;height:1px;background:#bfbfbf"></div><div style="left:26px;top:342px;width:870px;height:1px;background:#dadada"></div><div style="left:0;top:342px;width:26px;height:1px;background:#bfbfbf"></div><div style="left:26px;top:362px;width:870px;height:1px;background:#dadada"></div><div style="left:0;top:362px;width:26px;height:1px;background:#bfbfbf"></div><div style="left:26px;top:382px;width:870px;height:1px;background:#dadada"></div><div style="left:0;top:382px;width:26px;height:1px;background:#bfbfbf"></div><div style="left:26px;top:402px;width:870px;height:1px;background:#dadada"></div><div style="left:0;top:402px;width:26px;height:1px;background:#bfbfbf"></div><div style="left:26px;top:422px;width:870px;height:1px;background:#dadada"></div><div style="left:0;top:422px;width:26px;height:1px;background:#bfbfbf"></div><div style="left:26px;top:442px;width:870px;height:1px;background:#dadada"></div><div style="left:0;top:442px;width:26px;height:1px;background:#bfbfbf"></div><div style="left:26px;top:462px;width:870px;height:1px;background:#dadada"></div><div style="left:0;top:462px;width:26px;height:1px;background:#bfbfbf"></div><div style="left:26px;top:482px;width:870px;height:1px;background:#dadada"></div><div style="left:0;top:482px;width:26px;height:1px;background:#bfbfbf"></div><div style="left:26px;top:502px;width:870px;height:1px;background:#dadada"></div><div style="left:0;top:502px;width:26px;height:1px;background:#bfbfbf"></div><div style="left:26px;top:522px;width:870px;height:1px;background:#dadada"></div><div style="left:0;top:522px;width:26px;height:1px;background:#bfbfbf"></div><div style="left:26px;top:542px;width:870px;height:1px;background:#dadada"></div><div style="left:0;top:542px;width:26px;height:1px;background:#bfbfbf"></div><div style="left:26px;top:562px;width:870px;height:1px;background:#dadada"></div><div style="left:0;top:562px;width:26px;height:1px;background:#bfbfbf"></div><div style="left:26px;top:582px;width:870px;height:1px;background:#dadada"></div><div style="left:0;top:582px;width:26px;height:1px;background:#bfbfbf"></div><div style="left:26px;top:602px;width:870px;height:1px;background:#dadada"></div><div style="left:0;top:602px;width:26px;height:1px;background:#bfbfbf"></div><div style="left:26px;top:622px;width:870px;height:1px;background:#dadada"></div><div style="left:0;top:622px;width:26px;height:1px;background:#bfbfbf"></div><div style="left:26px;top:642px;width:870px;height:1px;background:#dadada"></div><div style="left:0;top:642px;width:26px;height:1px;background:#bfbfbf"></div><div style="left:26px;top:662px;width:870px;height:1px;background:#dadada"></div><div style="left:0;top:662px;width:26px;height:1px;background:#bfbfbf"></div><div style="left:26px;top:682px;width:870px;height:1px;background:#dadada"></div><div style="left:0;top:682px;width:26px;height:1px;background:#bfbfbf"></div><div style="left:26px;top:702px;width:870px;height:1px;background:#dadada"></div><div style="left:0;top:702px;width:26px;height:1px;background:#bfbfbf"></div><div style="left:26px;top:722px;width:870px;height:1px;background:#dadada"></div><div style="left:0;top:722px;width:26px;height:1px;background:#bfbfbf"></div><div style="left:26px;top:742px;width:870px;height:1px;background:#dadada"></div><div style="left:0;top:742px;width:26px;height:1px;background:#bfbfbf"></div><div style="left:26px;top:762px;width:870px;height:1px;background:#dadada"></div><div style="left:0;top:762px;width:26px;height:1px;background:#bfbfbf"></div><div style="left:26px;top:782px;width:870px;height:1px;background:#dadada"></div><div style="left:0;top:782px;width:26px;height:1px;background:#bfbfbf"></div><div style="left:26px;top:802px;width:870px;height:1px;background:#dadada"></div><div style="left:0;top:802px;width:26px;height:1px;background:#bfbfbf"></div><div style="left:26px;top:822px;width:870px;height:1px;background:#dadada"></div><div style="left:0;top:822px;width:26px;height:1px;background:#bfbfbf"></div><div style="left:26px;top:842px;width:870px;height:1px;background:#dadada"></div><div style="left:0;top:842px;width:26px;height:1px;background:#bfbfbf"></div><div style="left:26px;top:862px;width:870px;height:1px;background:#dadada"></div><div style="left:0;top:862px;width:26px;height:1px;background:#bfbfbf"></div><div style="left:26px;top:882px;width:870px;height:1px;background:#dadada"></div><div style="left:0;top:882px;width:26px;height:1px;background:#bfbfbf"></div><div style="left:26px;top:902px;width:870px;height:1px;background:#dadada"></div><div style="left:0;top:902px;width:26px;height:1px;background:#bfbfbf"></div><div style="left:26px;top:922px;width:870px;height:1px;background:#dadada"></div><div style="left:0;top:922px;width:26px;height:1px;background:#bfbfbf"></div><div style="left:26px;top:942px;width:870px;height:1px;background:#dadada"></div><div style="left:0;top:942px;width:26px;height:1px;background:#bfbfbf"></div><div style="left:26px;top:962px;width:870px;height:1px;background:#dadada"></div><div style="left:0;top:962px;width:26px;height:1px;background:#bfbfbf"></div><div style="left:26px;top:982px;width:870px;height:1px;background:#dadada"></div><div style="left:0;top:982px;width:26px;height:1px;background:#bfbfbf"></div><div style="left:100px;top:243px;width:1px;height:747px;background:#dadada"></div><div style="left:175px;top:243px;width:1px;height:747px;background:#dadada"></div><div style="left:610px;top:243px;width:1px;height:747px;background:#dadada"></div><div style="left:703px;top:243px;width:1px;height:747px;background:#dadada"></div><div style="left:803px;top:243px;width:1px;height:747px;background:#dadada"></div>
<div style="left:26px;top:862px;width:870px;height:19px;background:#ffff00"></div>
<div style="left:26px;top:881px;width:870px;height:3px;background:#0000c0"></div>
<div style="left:0px;top:803px;width:25px;height:19px;background:#d2d2d2"></div>
<div style="left:24px;top:803px;width:2px;height:19px;background:#217346"></div>
<div class="c" style="left:0;width:25px;text-align:center;top:244px;color:#262626">22</div><div class="c" style="left:103px;top:244px">04/01/2025</div><div class="c" style="left:178px;top:244px">Doorprize Riska melya</div><div class="c" style="left:396px;width:400px;text-align:right;top:244px;font-size:12.8px;">150.000,00</div><div class="c" style="left:489px;width:400px;text-align:right;top:244px;font-size:12.8px;">924.532,00</div><div class="c" style="left:0;width:25px;text-align:center;top:264px;color:#262626">23</div><div class="c" style="left:103px;top:264px">03/01/2026</div><div class="c" style="left:178px;top:264px">Makan lembur nasi padang 20 org (lembur Sabtu)</div><div class="c" style="left:396px;width:400px;text-align:right;top:264px;font-size:12.8px;">418.000,00</div><div class="c" style="left:489px;width:400px;text-align:right;top:264px;font-size:12.8px;">506.532,00</div><div class="c" style="left:0;width:25px;text-align:center;top:284px;color:#262626">24</div><div class="c" style="left:103px;top:284px">03/01/2026</div><div class="c" style="left:178px;top:284px">5 kerupuk</div><div class="c" style="left:396px;width:400px;text-align:right;top:284px;font-size:12.8px;">16.000,00</div><div class="c" style="left:489px;width:400px;text-align:right;top:284px;font-size:12.8px;">490.532,00</div><div class="c" style="left:0;width:25px;text-align:center;top:304px;color:#262626">25</div><div class="c" style="left:103px;top:304px">06/01/2026</div><div class="c" style="left:178px;top:304px">mouse aldi</div><div class="c" style="left:396px;width:400px;text-align:right;top:304px;font-size:12.8px;">30.000,00</div><div class="c" style="left:489px;width:400px;text-align:right;top:304px;font-size:12.8px;">460.532,00</div><div class="c" style="left:0;width:25px;text-align:center;top:324px;color:#262626">26</div><div class="c" style="left:103px;top:324px">06/01/2026</div><div class="c" style="left:178px;top:324px">kabel Utp, Lan, Mouspad</div><div class="c" style="left:396px;width:400px;text-align:right;top:324px;font-size:12.8px;">62.500,00</div><div class="c" style="left:489px;width:400px;text-align:right;top:324px;font-size:12.8px;">398.032,00</div><div class="c" style="left:0;width:25px;text-align:center;top:344px;color:#262626">27</div><div class="c" style="left:103px;top:344px">07/12/2025</div><div class="c" style="left:178px;top:344px">Galon 4 @ 20500</div><div class="c" style="left:396px;width:400px;text-align:right;top:344px;font-size:12.8px;">82.000,00</div><div class="c" style="left:489px;width:400px;text-align:right;top:344px;font-size:12.8px;">316.032,00</div><div class="c" style="left:0;width:25px;text-align:center;top:364px;color:#262626">28</div><div class="c" style="left:103px;top:364px">07/12/2025</div><div class="c" style="left:178px;top:364px">ongkos angkut 4 galon</div><div class="c" style="left:396px;width:400px;text-align:right;top:364px;font-size:12.8px;">8.000,00</div><div class="c" style="left:489px;width:400px;text-align:right;top:364px;font-size:12.8px;">308.032,00</div><div class="c" style="left:0;width:25px;text-align:center;top:384px;color:#262626">29</div><div class="c" style="left:103px;top:384px">07/01/2025</div><div class="c" style="left:178px;top:384px">mouse aldi</div><div class="c" style="left:396px;width:400px;text-align:right;top:384px;font-size:12.8px;">30.000,00</div><div class="c" style="left:489px;width:400px;text-align:right;top:384px;font-size:12.8px;">278.032,00</div><div class="c" style="left:0;width:25px;text-align:center;top:404px;color:#262626">30</div><div class="c" style="left:103px;top:404px">10/01/2025</div><div class="c" style="left:178px;top:404px">ayam tetah 19org (lembur Sabtu)</div><div class="c" style="left:396px;width:400px;text-align:right;top:404px;font-size:12.8px;">408.400,00</div><div class="c" style="left:806px;top:404px">-</div><div class="c" style="left:489px;width:400px;text-align:right;top:404px;font-size:12.8px;">130.368,00</div><div class="c" style="left:0;width:25px;text-align:center;top:424px;color:#262626">31</div><div class="c" style="left:103px;top:424px">10/01/2025</div><div class="c" style="left:178px;top:424px">parkir abag shopee PP</div><div class="c" style="left:396px;width:400px;text-align:right;top:424px;font-size:12.8px;">4.000,00</div><div class="c" style="left:806px;top:424px">-</div><div class="c" style="left:489px;width:400px;text-align:right;top:424px;font-size:12.8px;">134.368,00</div><div class="c" style="left:0;width:25px;text-align:center;top:444px;color:#262626">32</div><div class="c" style="left:103px;top:444px">11/01/2026</div><div class="c" style="left:178px;top:444px">Oisave Tissue 4 box, handshoap, wipol</div><div class="c" style="left:396px;width:400px;text-align:right;top:444px;font-size:12.8px;">222.800,00</div><div class="c" style="left:806px;top:444px">-</div><div class="c" style="left:489px;width:400px;text-align:right;top:444px;font-size:12.8px;">357.168,00</div><div class="c" style="left:0;width:25px;text-align:center;top:464px;color:#262626">33</div><div class="c" style="left:103px;top:464px">13/01/2026</div><div class="c" style="left:178px;top:464px">Galon 4 @ 20500</div><div class="c" style="left:396px;width:400px;text-align:right;top:464px;font-size:12.8px;">82.000,00</div><div class="c" style="left:806px;top:464px">-</div><div class="c" style="left:489px;width:400px;text-align:right;top:464px;font-size:12.8px;">439.168,00</div><div class="c" style="left:0;width:25px;text-align:center;top:484px;color:#262626">34</div><div class="c" style="left:103px;top:484px">13/01/2026</div><div class="c" style="left:178px;top:484px">ongkos angkut 4 galon</div><div class="c" style="left:396px;width:400px;text-align:right;top:484px;font-size:12.8px;">8.000,00</div><div class="c" style="left:806px;top:484px">-</div><div class="c" style="left:489px;width:400px;text-align:right;top:484px;font-size:12.8px;">447.168,00</div><div class="c" style="left:0;width:25px;text-align:center;top:504px;color:#262626">35</div><div class="c" style="left:103px;top:504px">13/01/2025</div><div class="c" style="left:178px;top:504px">kantor Moi (sv samsung)</div><div class="c" style="left:396px;width:400px;text-align:right;top:504px;font-size:12.8px;">30.000,00</div><div class="c" style="left:806px;top:504px">-</div><div class="c" style="left:489px;width:400px;text-align:right;top:504px;font-size:12.8px;">477.168,00</div><div class="c" style="left:0;width:25px;text-align:center;top:524px;color:#262626">36</div><div class="c" style="left:103px;top:524px">13/01/2025</div><div class="c" style="left:178px;top:524px">Moi Kantor</div><div class="c" style="left:396px;width:400px;text-align:right;top:524px;font-size:12.8px;">28.500,00</div><div class="c" style="left:806px;top:524px">-</div><div class="c" style="left:489px;width:400px;text-align:right;top:524px;font-size:12.8px;">505.668,00</div><div class="c" style="left:0;width:25px;text-align:center;top:544px;color:#262626">37</div><div class="c" style="left:103px;top:544px">16/01/2026</div><div class="c" style="left:178px;top:544px">rembes bensin pak pei ke Yapi</div><div class="c" style="left:396px;width:400px;text-align:right;top:544px;font-size:12.8px;">15.600,00</div><div class="c" style="left:806px;top:544px">-</div><div class="c" style="left:489px;width:400px;text-align:right;top:544px;font-size:12.8px;">521.268,00</div><div class="c" style="left:0;width:25px;text-align:center;top:564px;color:#262626">38</div><div class="c" style="left:103px;top:564px">17/01/2026</div><div class="c" style="left:178px;top:564px">padang 17 org lembur Sabtu)</div><div class="c" style="left:396px;width:400px;text-align:right;top:564px;font-size:12.8px;">379.000,00</div><div class="c" style="left:806px;top:564px">-</div><div class="c" style="left:489px;width:400px;text-align:right;top:564px;font-size:12.8px;">900.268,00</div><div class="c" style="left:0;width:25px;text-align:center;top:584px;color:#262626">39</div><div class="c" style="left:103px;top:584px">17/01/2026</div><div class="c" style="left:178px;top:584px">Jus 2 Org</div><div class="c" style="left:396px;width:400px;text-align:right;top:584px;font-size:12.8px;">25.000,00</div><div class="c" style="left:806px;top:584px">-</div><div class="c" style="left:489px;width:400px;text-align:right;top:584px;font-size:12.8px;">925.268,00</div><div class="c" style="left:0;width:25px;text-align:center;top:604px;color:#262626">40</div><div class="c" style="left:103px;top:604px">17/01/2026</div><div class="c" style="left:178px;top:604px">SV samsung Ganti Connector</div><div class="c" style="left:396px;width:400px;text-align:right;top:604px;font-size:12.8px;">373.585,00</div><div class="c" style="left:806px;top:604px">-</div><div class="c" style="left:489px;width:400px;text-align:right;top:604px;font-size:12.8px;">1.298.853,00</div><div class="c" style="left:0;width:25px;text-align:center;top:624px;color:#262626">41</div><div class="c" style="left:103px;top:624px">19/01/2026</div><div class="c" style="left:178px;top:624px">galon 3@ 21000 + ongkos Angkut</div><div class="c" style="left:396px;width:400px;text-align:right;top:624px;font-size:12.8px;">70.000,00</div><div class="c" style="left:806px;top:624px">-</div><div class="c" style="left:489px;width:400px;text-align:right;top:624px;font-size:12.8px;">1.368.853,00</div><div class="c" style="left:0;width:25px;text-align:center;top:644px;color:#262626">42</div><div class="c" style="left:103px;top:644px">21/01/2026</div><div class="c" style="left:178px;top:644px">Kantor - Kel Kedsel</div><div class="c" style="left:396px;width:400px;text-align:right;top:644px;font-size:12.8px;">98.500,00</div><div class="c" style="left:806px;top:644px">-</div><div class="c" style="left:489px;width:400px;text-align:right;top:644px;font-size:12.8px;">1.467.353,00</div><div class="c" style="left:0;width:25px;text-align:center;top:664px;color:#262626">43</div><div class="c" style="left:103px;top:664px">21/01/2026</div><div class="c" style="left:178px;top:664px">makan di BPN</div><div class="c" style="left:396px;width:400px;text-align:right;top:664px;font-size:12.8px;">24.000,00</div><div class="c" style="left:806px;top:664px">-</div><div class="c" style="left:489px;width:400px;text-align:right;top:664px;font-size:12.8px;">1.491.353,00</div><div class="c" style="left:0;width:25px;text-align:center;top:684px;color:#262626">44</div><div class="c" style="left:103px;top:684px">21/06/2026</div><div class="c" style="left:178px;top:684px">BPN utr-Kantor</div><div class="c" style="left:396px;width:400px;text-align:right;top:684px;font-size:12.8px;">15.000,00</div><div class="c" style="left:806px;top:684px">-</div><div class="c" style="left:489px;width:400px;text-align:right;top:684px;font-size:12.8px;">1.506.353,00</div><div class="c" style="left:0;width:25px;text-align:center;top:704px;color:#262626">45</div><div class="c" style="left:103px;top:704px">24/01/2026</div><div class="c" style="left:178px;top:704px">AKK 17 Org (lembur Sabtu )</div><div class="c" style="left:396px;width:400px;text-align:right;top:704px;font-size:12.8px;">579.700,00</div><div class="c" style="left:806px;top:704px">-</div><div class="c" style="left:489px;width:400px;text-align:right;top:704px;font-size:12.8px;">2.086.053,00</div><div class="c" style="left:0;width:25px;text-align:center;top:724px;color:#262626">46</div><div class="c" style="left:103px;top:724px">24/01/2026</div><div class="c" style="left:178px;top:724px">UANG MASUK</div><div class="c" style="left:296px;width:400px;text-align:right;top:724px;font-size:12.8px;">3.000.000,00</div><div class="c" style="left:489px;width:400px;text-align:right;top:724px;font-size:12.8px;">913.947,00</div><div class="c" style="left:0;width:25px;text-align:center;top:744px;color:#262626">47</div><div class="c" style="left:103px;top:744px">24/01/2025</div><div class="c" style="left:178px;top:744px">aqua 2 @21000 (indomart)</div><div class="c" style="left:396px;width:400px;text-align:right;top:744px;font-size:12.8px;">42.000,00</div><div class="c" style="left:750px;width:200px;text-align:center;top:744px;color:#000;font-size:12.8px;">#REF!</div><div class="c" style="left:0;width:25px;text-align:center;top:764px;color:#262626">48</div><div class="c" style="left:103px;top:764px">26/01/2026</div><div class="c" style="left:178px;top:764px">kabel tis</div><div class="c" style="left:396px;width:400px;text-align:right;top:764px;font-size:12.8px;">40.000,00</div><div class="c" style="left:750px;width:200px;text-align:center;top:764px;color:#000;font-size:12.8px;">#REF!</div><div class="c" style="left:0;width:25px;text-align:center;top:784px;color:#262626">49</div><div class="c" style="left:103px;top:784px">26/01/2026</div><div class="c" style="left:178px;top:784px">4 aqua @21000, 1 galon kosong 35000</div><div class="c" style="left:396px;width:400px;text-align:right;top:784px;font-size:12.8px;">119.000,00</div><div class="c" style="left:750px;width:200px;text-align:center;top:784px;color:#000;font-size:12.8px;">#REF!</div><div class="c" style="left:0;width:25px;text-align:center;top:804px;color:#217346">50</div><div class="c" style="left:103px;top:804px">26/01/2026</div><div class="c" style="left:178px;top:804px">ongkos angkut 4 galon</div><div class="c" style="left:750px;width:200px;text-align:center;top:804px;color:#000;font-size:12.8px;">#REF!</div><div class="c" style="left:0;width:25px;text-align:center;top:824px;color:#262626">51</div><div class="c" style="left:750px;width:200px;text-align:center;top:824px;color:#000;font-size:12.8px;">#REF!</div><div class="c" style="left:0;width:25px;text-align:center;top:844px;color:#262626">52</div><div class="c" style="left:750px;width:200px;text-align:center;top:844px;color:#000;font-size:12.8px;">#REF!</div><div class="c" style="left:0;width:25px;text-align:center;top:864px;color:#262626">53</div><div class="c" style="left:0;width:25px;text-align:center;top:884px;color:#262626">54</div><div class="c" style="left:750px;width:200px;text-align:center;top:884px;color:#000;font-size:12.8px;">#REF!</div><div class="c" style="left:0;width:25px;text-align:center;top:904px;color:#262626">55</div><div class="c" style="left:750px;width:200px;text-align:center;top:904px;color:#000;font-size:12.8px;">#REF!</div><div class="c" style="left:0;width:25px;text-align:center;top:924px;color:#262626">56</div><div class="c" style="left:750px;width:200px;text-align:center;top:924px;color:#000;font-size:12.8px;">#REF!</div><div class="c" style="left:0;width:25px;text-align:center;top:944px;color:#262626">57</div><div class="c" style="left:750px;width:200px;text-align:center;top:944px;color:#000;font-size:12.8px;">#REF!</div><div class="c" style="left:0;width:25px;text-align:center;top:964px;color:#262626">58</div><div class="c" style="left:750px;width:200px;text-align:center;top:964px;color:#000;font-size:12.8px;">#REF!</div><div class="c" style="left:0;width:25px;text-align:center;top:984px;color:#262626">59</div><div class="c" style="left:750px;width:200px;text-align:center;top:984px;color:#000;font-size:12.8px;">#REF!</div><div class="c" style="left:29px;top:884px;transform:scaleX(.86);transform-origin:0 0">FEBRUARI</div><div class="c" style="left:899px;top:304px">bon di devi</div>
<div style="left:26px;top:243px;width:1px;height:747px;background:#0c0c7c"></div>
<div style="left:27px;top:243px;width:1px;height:747px;background:#b8b8e0"></div>
<div style="left:895px;top:243px;width:3px;height:747px;background:#0000c0"></div>
<svg style="left:803px;top:743px;" width="7" height="6" viewBox="0 0 7 6"><path d="M0 0h7L0 6z" fill="#1d7a34"/></svg>
<svg style="left:803px;top:763px;" width="7" height="6" viewBox="0 0 7 6"><path d="M0 0h7L0 6z" fill="#1d7a34"/></svg>
<svg style="left:803px;top:783px;" width="7" height="6" viewBox="0 0 7 6"><path d="M0 0h7L0 6z" fill="#1d7a34"/></svg>
<svg style="left:803px;top:803px;" width="7" height="6" viewBox="0 0 7 6"><path d="M0 0h7L0 6z" fill="#1d7a34"/></svg>
<div style="left:702px;top:802px;width:102px;height:22px;border:2px solid #217346;box-sizing:border-box"></div>
<svg style="left:800px;top:820px;" width="10" height="12" viewBox="0 0 10 12"><rect x="1" y="1" width="6" height="5" fill="#217346"/><path d="M2 5h8l-7 6z" fill="#1d7a34"/></svg>
<div style="left:1899px;top:223px;width:21px;height:767px;background:#dedede"></div>
<div style="left:1899px;top:223px;width:21px;height:20px;background:#e6e6e6"></div>
<div style="left:1902px;top:225px;width:15px;height:15px;background:#fff;border:1px solid #c6c6c6;box-sizing:border-box"></div>
<svg style="left:1905px;top:230px;" width="9" height="5" viewBox="0 0 9 5"><path d="M0 5L4.5 0 9 5z" fill="#555"/></svg>
<div style="left:1902px;top:272px;width:15px;height:52px;background:#fff;border:1px solid #ababab;box-sizing:border-box"></div>
<div style="left:1902px;top:975px;width:15px;height:15px;background:#fff;border:1px solid #c6c6c6;box-sizing:border-box"></div>
<svg style="left:1905px;top:980px;" width="9" height="5" viewBox="0 0 9 5"><path d="M0 0h9L4.5 5z" fill="#555"/></svg>
<div style="left:0px;top:990px;width:1920px;height:28px;background:#e6e6e6"></div>
<div style="left:0px;top:990px;width:1920px;height:1px;background:#b0b0b0"></div>
<svg style="left:24px;top:998px;" width="10" height="10" viewBox="0 0 10 10"><path d="M7 1v8L2 5z" fill="#bdbdbd"/></svg>
<svg style="left:52px;top:998px;" width="10" height="10" viewBox="0 0 10 10"><path d="M3 1v8l5-4z" fill="#bdbdbd"/></svg>
<div style="left:101px;top:992px;width:98px;height:23px;background:#ffff00"></div>
<div class="t" style="left:-150.5px;width:600px;text-align:center;top:993.0px;line-height:20px;font-size:12.5px;color:#262626;">Rekapitulasi</div>
<div class="t" style="left:-43.0px;width:600px;text-align:center;top:993.0px;line-height:20px;font-size:12.5px;color:#444;">Member Parkir</div>
<div style="left:314px;top:989px;width:53px;height:26px;background:#fff"></div>
<div style="left:314px;top:1013px;width:53px;height:2px;background:#217346"></div>
<div class="t" style="left:40.5px;width:600px;text-align:center;top:993.0px;line-height:20px;font-size:13px;color:#217346;font-weight:bold">2026</div>
<div class="t" style="left:92.5px;width:600px;text-align:center;top:993.0px;line-height:20px;font-size:12.5px;color:#444;">2025</div>
<div class="t" style="left:144.0px;width:600px;text-align:center;top:993.0px;line-height:20px;font-size:12.5px;color:#444;">2024</div>
<div class="t" style="left:196.0px;width:600px;text-align:center;top:993.0px;line-height:20px;font-size:12.5px;color:#444;">2023</div>
<div class="t" style="left:248.0px;width:600px;text-align:center;top:993.0px;line-height:20px;font-size:12.5px;color:#444;">2022</div>
<div class="t" style="left:300.0px;width:600px;text-align:center;top:993.0px;line-height:20px;font-size:12.5px;color:#444;">2021</div>
<div class="t" style="left:352.0px;width:600px;text-align:center;top:993.0px;line-height:20px;font-size:12.5px;color:#444;">2020</div>
<div class="t" style="left:406.0px;width:600px;text-align:center;top:993.0px;line-height:20px;font-size:12.5px;color:#444;">2019</div>
<div class="t" style="left:460.0px;width:600px;text-align:center;top:993.0px;line-height:20px;font-size:12.5px;color:#444;">2018</div>
<div class="t" style="left:512.0px;width:600px;text-align:center;top:993.0px;line-height:20px;font-size:12.5px;color:#444;">2017</div>
<div style="left:100px;top:994px;width:1px;height:19px;background:#a8a8a8"></div>
<div style="left:199px;top:994px;width:1px;height:19px;background:#a8a8a8"></div>
<div style="left:418px;top:994px;width:1px;height:19px;background:#a8a8a8"></div>
<div style="left:470px;top:994px;width:1px;height:19px;background:#a8a8a8"></div>
<div style="left:522px;top:994px;width:1px;height:19px;background:#a8a8a8"></div>
<div style="left:574px;top:994px;width:1px;height:19px;background:#a8a8a8"></div>
<div style="left:626px;top:994px;width:1px;height:19px;background:#a8a8a8"></div>
<div style="left:678px;top:994px;width:1px;height:19px;background:#a8a8a8"></div>
<div style="left:734px;top:994px;width:1px;height:19px;background:#a8a8a8"></div>
<div style="left:786px;top:994px;width:1px;height:19px;background:#a8a8a8"></div>
<div style="left:838px;top:994px;width:1px;height:19px;background:#a8a8a8"></div>
<svg style="left:870px;top:995px;" width="18" height="18" viewBox="0 0 18 18"><circle cx="9" cy="9" r="7.5" fill="none" stroke="#777" stroke-width="1.2"/><path d="M9 4.5v9M4.5 9h9" stroke="#777" stroke-width="1.6"/></svg>
<div style="left:1152px;top:998px;width:2px;height:2px;background:#b4b4b4"></div>
<div style="left:1152px;top:1003px;width:2px;height:2px;background:#b4b4b4"></div>
<div style="left:1152px;top:1008px;width:2px;height:2px;background:#b4b4b4"></div>
<div style="left:1169px;top:997px;width:716px;height:15px;background:#dcdcdc;border:1px solid #ababab;box-sizing:border-box"></div>
<div style="left:1184px;top:998px;width:592px;height:13px;background:#fff"></div>
<div style="left:1183px;top:998px;width:1px;height:13px;background:#ababab"></div>
<svg style="left:1173px;top:1000px;" width="6" height="9" viewBox="0 0 6 9"><path d="M5 0v9L0 4.5z" fill="#444"/></svg>
<div style="left:1884px;top:997px;width:15px;height:15px;background:#fff;border:1px solid #ababab;box-sizing:border-box"></div>
<svg style="left:1889px;top:1000px;" width="6" height="9" viewBox="0 0 6 9"><path d="M0 0v9l5-4.5z" fill="#444"/></svg>
<div style="left:0px;top:1018px;width:1920px;height:22px;background:#f3f3f3"></div>
<div style="left:0px;top:1018px;width:1920px;height:1px;background:#d6d6d6"></div>
<div class="t" style="left:7px;top:1019.0px;line-height:20px;font-size:12px;color:#262626;">Enter</div>
<svg style="left:1631px;top:1021px;" width="16" height="16" viewBox="0 0 16 16"><path d="M1.5 1.5h13v13h-13zM1.5 5.5h13M1.5 9.5h13M5.5 1.5v13M9.5 1.5v13" fill="none" stroke="#666"/></svg>
<svg style="left:1672px;top:1021px;" width="16" height="16" viewBox="0 0 16 16"><path d="M1.5 1.5h13v13h-13z" fill="none" stroke="#666"/><path d="M4.5 4.5h7v7h-7zM6 6.5h4M6 8h4M6 9.5h4" fill="none" stroke="#666" stroke-width=".8"/></svg>
<svg style="left:1712px;top:1021px;" width="16" height="16" viewBox="0 0 16 16"><path d="M1.5 1.5h13v13h-13zM1.5 9.5h13M7.5 1.5v8" fill="none" stroke="#666"/></svg>
<div style="left:1746px;top:1028px;width:8px;height:1.2px;background:#999"></div>
<div style="left:1758px;top:1029px;width:102px;height:1px;background:#bbb"></div>
<div style="left:1809px;top:1025px;width:1px;height:6px;background:#999"></div>
<svg style="left:1862px;top:1023px;" width="10" height="10" viewBox="0 0 10 10"><path d="M5 1v8M1 5h8" stroke="#999"/></svg>
<div class="t" style="left:1598.5px;width:600px;text-align:center;top:1018.5px;line-height:20px;font-size:10.5px;color:#b0b0b0;">100%</div>
<div style="left:0px;top:1040px;width:1920px;height:40px;background:#dfdbdb"></div>
<svg style="left:15px;top:1052px;" width="18" height="16" viewBox="0 0 18 16"><path d="M0 2.3l7.2-1v6.9H0zM8.1 1.2L18 0v8.2H8.1zM0 8.9h7.2v6.9L0 14.8zM8.1 8.9H18V17l-9.9-1.4z" fill="#111"/></svg>
<div style="left:49px;top:1041px;width:287px;height:39px;background:#fff"></div>
<svg style="left:59px;top:1049px;" width="20" height="20" viewBox="0 0 20 20"><circle cx="12" cy="7.5" r="6" fill="none" stroke="#222" stroke-width="1.3"/><path d="M7.8 11.8L1.5 18.5" stroke="#222" stroke-width="1.5"/></svg>
<div class="t" style="left:88px;top:1050.5px;line-height:20px;font-size:14.4px;color:#444;">Type here to search</div>
<svg style="left:260px;top:1040px;" width="76" height="40" viewBox="0 0 76 40"><path d="M2 40C14 33 40 30 76 31V40z" fill="#e6c89b"/><path d="M8 15C9 11 11 6 13 3l3-1 4 4 11 6 9 1h13l3 2-1 9-2 4v11h-1.5l-1-10-2-2-2 12h-1.5l-.5-11-5-1-7-1-2 12h-1.5l-.5-12-4-7-6-3-5 1z" fill="#ecebf2" stroke="#9a98b0" stroke-width=".6"/><path d="M53 14l4 2 5 14-2 1-5-12z" fill="#3b3a5c"/><path d="M8 15l1 2 3-1z" fill="#222"/><path d="M13 3l3-1 4 4 11 6" fill="none" stroke="#2e2d4a" stroke-width="2.2"/><path d="M17 8l-2 6M21 9l-3 7M25 11l-3 8M29 12l-2 9M33 13l-1 11M37 13l-1 12M41 13l0 12M45 13l1 12M49 13l1 10M52 15l-3 7M24 24l3-1" stroke="#3b3a5c" stroke-width="1.4"/></svg>
<svg style="left:351px;top:1048px;" width="25" height="24" viewBox="0 0 25 24"><defs><linearGradient id="eg" x1="1" y1="0" x2="0" y2="1"><stop offset="0" stop-color="#5fd35a"/><stop offset=".35" stop-color="#2bb8c8"/><stop offset=".7" stop-color="#1b7fd6"/><stop offset="1" stop-color="#0f4ea6"/></linearGradient></defs><circle cx="12.5" cy="12" r="12" fill="url(#eg)"/><path d="M.8 14C2 20 7 24 12.5 24c4 0 7.5-2 9.5-5-3 1.5-8 1.5-11-1.5C8 15 9 11 12 10c-5-1-10 0-11.2 4z" fill="#0e53a8"/><ellipse cx="13.5" cy="13.5" rx="3.2" ry="2.6" fill="#c8f0ee"/><path d="M10 13c1 4 6 5.5 10 3.5" fill="none" stroke="#d9f6f4" stroke-width="1.6"/></svg>
<svg style="left:400px;top:1047px;" width="27" height="28" viewBox="0 0 27 28"><circle cx="12" cy="13" r="12" fill="#e0362c"/><path d="M12 13L24 12A12 12 0 0 1 6 23.4z" fill="#f9c22e"/><path d="M12 13L6 23.4A12 12 0 0 1 1.2 7z" fill="#2ea44f"/><circle cx="12" cy="13" r="5.6" fill="#fff"/><circle cx="12" cy="13" r="4.4" fill="#3b78e7"/><circle cx="18.5" cy="20" r="7" fill="#7d4fd3"/><path d="M16 24l2.5-7 2.5 7M17 22h3" fill="none" stroke="#fff" stroke-width="1.1"/></svg>
<svg style="left:449px;top:1048px;" width="24" height="24" viewBox="0 0 24 24"><defs><linearGradient id="fg" x1="0" y1="1" x2="1" y2="0"><stop offset="0" stop-color="#ff3a6e"/><stop offset=".5" stop-color="#ff8a1f"/><stop offset="1" stop-color="#ffd43a"/></linearGradient></defs><circle cx="11.5" cy="12.5" r="11" fill="url(#fg)"/><circle cx="11.5" cy="13" r="5.5" fill="#7b3fe0"/><path d="M6 12c1-4 5-5 7-4-2 1-2 3 0 4" fill="#ff9a2a"/><path d="M1 9c2-6 8-9 14-7-4 0-7 3-7 5" fill="#ffc53a"/></svg>
<svg style="left:498px;top:1050px;" width="22" height="20" viewBox="0 0 22 20"><path d="M0 2h8l2 2h12v16H0z" fill="#f4b73f"/><rect x="0" y="5" width="22" height="15" fill="#ffd35c"/><rect x="2" y="1" width="7" height="2.5" fill="#c99a2e"/><path d="M5 9h12v8h-3.5v-3.5h-5V17H5z" fill="#2f7fd0"/></svg>
<div style="left:535px;top:1040px;width:44px;height:40px;background:#ece9e9"></div>
<svg style="left:546px;top:1047px;" width="25" height="24" viewBox="0 0 25 24"><rect x="7" y="1" width="17" height="22" rx="1" fill="#21a366"/><rect x="7" y="8" width="17" height="7" fill="#107c41"/><rect x="7" y="15" width="17" height="8" fill="#185c37"/><rect x="0" y="5" width="13" height="14" rx="1" fill="#107c41"/><text x="6.5" y="16" font-size="10" font-weight="bold" fill="#fff" text-anchor="middle" font-family="Liberation Sans">X</text></svg>
<svg style="left:595px;top:1047px;" width="25" height="24" viewBox="0 0 25 24"><rect x="7" y="1" width="17" height="22" rx="1" fill="#41a5ee"/><rect x="7" y="8" width="17" height="7" fill="#2b7cd3"/><rect x="7" y="15" width="17" height="8" fill="#185abd"/><rect x="0" y="5" width="13" height="14" rx="1" fill="#185abd"/><text x="6.5" y="16" font-size="9" font-weight="bold" fill="#fff" text-anchor="middle" font-family="Liberation Sans">W</text></svg>
<svg style="left:645px;top:1048px;" width="22" height="22" viewBox="0 0 22 22"><g fill="#3c3c3c"><circle cx="11" cy="11" r="7.5"/><rect x="9" y="0.5" width="4" height="5" rx=".8"/><rect x="9" y="16.5" width="4" height="5" rx=".8"/><rect x="0.5" y="9" width="5" height="4" rx=".8"/><rect x="16.5" y="9" width="5" height="4" rx=".8"/><rect x="9" y="0.5" width="4" height="5" rx=".8" transform="rotate(45 11 11)"/><rect x="9" y="16.5" width="4" height="5" rx=".8" transform="rotate(45 11 11)"/><rect x="0.5" y="9" width="5" height="4" rx=".8" transform="rotate(45 11 11)"/><rect x="16.5" y="9" width="5" height="4" rx=".8" transform="rotate(45 11 11)"/></g><circle cx="11" cy="11" r="3.6" fill="#dfdbdb"/></svg>
<svg style="left:694px;top:1048px;" width="22" height="22" viewBox="0 0 22 22"><rect x="0" y="0" width="22" height="22" rx="3" fill="#c4161c"/><path d="M5 17c2-3 5-9 5-12 0-2-2-2-2 0 0 3 4 8 9 9 2 0 2-2 0-2-4 0-8 2-12 5" fill="none" stroke="#fff" stroke-width="1.3"/></svg>
<svg style="left:743px;top:1047px;" width="24" height="24" viewBox="0 0 24 24"><ellipse cx="11" cy="9" rx="9" ry="6" fill="none" stroke="#e36a7d" stroke-width="1.2"/><path d="M9 6l4 12M15 7l-6 11" stroke="#555" stroke-width="1.2"/><circle cx="9" cy="19" r="2.5" fill="none" stroke="#2e8ad8" stroke-width="1.5"/><circle cx="15" cy="19" r="2.5" fill="none" stroke="#2e8ad8" stroke-width="1.5"/></svg>
<div style="left:343px;top:1078px;width:40px;height:2px;background:#2b7ad1"></div>
<div style="left:392px;top:1078px;width:40px;height:2px;background:#2b7ad1"></div>
<div style="left:441px;top:1078px;width:40px;height:2px;background:#2b7ad1"></div>
<div style="left:490px;top:1078px;width:40px;height:2px;background:#2b7ad1"></div>
<div style="left:539px;top:1078px;width:40px;height:2px;background:#2b7ad1"></div>
<div style="left:588px;top:1078px;width:40px;height:2px;background:#2b7ad1"></div>
<div style="left:636px;top:1078px;width:40px;height:2px;background:#2b7ad1"></div>
<div style="left:686px;top:1078px;width:40px;height:2px;background:#2b7ad1"></div>
<div style="left:735px;top:1078px;width:40px;height:2px;background:#2b7ad1"></div>
<svg style="left:1516px;top:1046px;" width="30" height="26" viewBox="0 0 30 26"><path d="M3 10C3 12 4 22 11 23h4l-2-12z" fill="#f39a1e"/><ellipse cx="8.5" cy="7" rx="5.5" ry="4.5" fill="#aad0ee"/><ellipse cx="8" cy="6" rx="3" ry="2.5" fill="#c9b8ee"/><ellipse cx="19" cy="18.5" rx="7.5" ry="4.5" fill="#b4d8f6"/><circle cx="20" cy="7.3" r="5.6" fill="#c8202c"/><text x="20" y="10.6" font-size="9" fill="#fff" text-anchor="middle" font-weight="bold" font-family="Liberation Sans">5</text></svg>
<div class="t" style="left:1550px;top:1050.0px;line-height:20px;font-size:13.5px;color:#222;">30°C</div>
<div class="t" style="left:1587px;top:1050.0px;line-height:20px;font-size:13.4px;color:#222;">Sebagian cerah</div>
<svg style="left:1706px;top:1055px;" width="14" height="9" viewBox="0 0 14 9"><path d="M1 7.5l6-6 6 6" fill="none" stroke="#111" stroke-width="1.2"/></svg>
<svg style="left:1729px;top:1050px;" width="16" height="20" viewBox="0 0 16 20"><path d="M3.5 3.5a6 3 0 0 1 8 0M3.5 16.5a6 3 0 0 0 8 0" fill="none" stroke="#222" stroke-width="1.2"/><rect x="3.5" y="6.5" width="6.5" height="7" rx="1.5" fill="none" stroke="#111" stroke-width="1.3"/><path d="M10 10l3-2.5v5z" fill="#111"/><path d="M13 7v6" stroke="#111" stroke-width="1.2"/></svg>
<svg style="left:1752px;top:1052px;" width="19" height="17" viewBox="0 0 19 17"><rect x="4.5" y="2.5" width="13" height="9.5" fill="none" stroke="#111" stroke-width="1.2"/><path d="M11 12v2.5M8 14.5h6" stroke="#111" stroke-width="1.2"/><rect x="1" y="2" width="4" height="4.5" fill="#dfdbdb" stroke="#111" stroke-width="1.1"/><path d="M2.5 6.5v8" stroke="#111" stroke-width="1.1"/></svg>
<svg style="left:1775px;top:1052px;" width="20" height="16" viewBox="0 0 20 16"><path d="M2.5 5h3l4-3.5v13l-4-3.5h-3z" fill="none" stroke="#111" stroke-width="1.2"/><path d="M12 5a3.5 3.5 0 0 1 0 6" fill="none" stroke="#222" stroke-width="1.1"/><path d="M14 3a6.5 6.5 0 0 1 0 10M16 1.5a9 9 0 0 1 0 13" fill="none" stroke="#888" stroke-width=".9"/></svg>
<div class="t" style="left:1531px;width:600px;text-align:center;top:1041.0px;line-height:20px;font-size:12px;color:#222;">15:20</div>
<div class="t" style="left:1531px;width:600px;text-align:center;top:1059.0px;line-height:20px;font-size:12px;color:#222;">31/01/2026</div>
<svg style="left:1877px;top:1050px;" width="28" height="26" viewBox="0 0 28 26"><path d="M2.5 2h15.5v12.5H8l-2.5 2v-2h-3z" fill="#111"/><path d="M5 5h9.5M5 8h9.5M5 11h6" stroke="#fff" stroke-width="1.2"/><circle cx="17.3" cy="17.3" r="7.2" fill="#dfdbdb" stroke="#8a8a8a" stroke-width="1"/><text x="17.5" y="21.3" font-size="11" fill="#111" text-anchor="middle" font-family="Liberation Sans">3</text></svg>
<div style="left:1914px;top:1040px;width:1px;height:40px;background:#b5b1b1"></div>
</body></html>
